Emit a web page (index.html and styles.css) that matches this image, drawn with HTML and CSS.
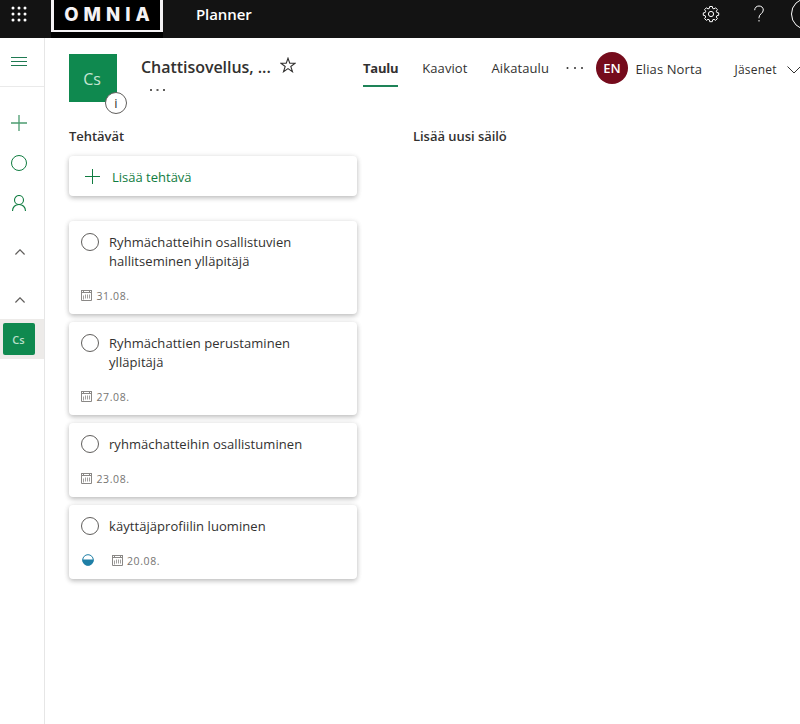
FILE: index.html
```html
<!DOCTYPE html>
<html lang="fi">
<head>
<meta charset="utf-8">
<title>Planner</title>
<link rel="stylesheet" href="styles.css">
</head>
<body>
<svg class="defs" width="0" height="0" aria-hidden="true">
  <symbol id="calendar" viewBox="0 0 11 11">
    <path d="M.5 1v9.500h10V1M0 .5h11M.5 2.500h10M2.500 0v2M8.500 0v2" fill="none" stroke="#8a8886"/>
    <path d="M2.500 5.500v4M4.500 4.500v4M6.500 4.500v4M8.500 4.500v4" fill="none" stroke="#a19f9d"/>
  </symbol>
</svg>
<header class="topbar">
  <svg class="waffle" width="16" height="16" viewBox="0 0 16 16" fill="#fff">
    <circle cx="2" cy="2" r="1.500"/><circle cx="8" cy="2" r="1.500"/><circle cx="14" cy="2" r="1.500"/>
    <circle cx="2" cy="8" r="1.500"/><circle cx="8" cy="8" r="1.500"/><circle cx="14" cy="8" r="1.500"/>
    <circle cx="2" cy="14" r="1.500"/><circle cx="8" cy="14" r="1.500"/><circle cx="14" cy="14" r="1.500"/>
  </svg>
  <div class="logo"><div class="logo-frame"><span>OMNIA</span></div></div>
  <span class="app-name">Planner</span>
  <svg class="gear" width="18" height="18" viewBox="-9 -9 18 18" fill="none" stroke="#fff">
    <path d="M-1.300-7.500h2.600l.4 1.900 1.300.5 1.600-1.100 1.800 1.800-1.100 1.600.5 1.300 1.900.4v2.400l-1.900.4-.5 1.300 1.100 1.600-1.800 1.800-1.600-1.100-1.300.5-.4 1.900h-2.600l-.4-1.900-1.300-.5-1.600 1.100-1.800-1.800 1.100-1.600-.5-1.300-1.900-.4v-2.400l1.900-.4.5-1.300-1.100-1.600 1.800-1.800 1.600 1.100 1.300-.5z"/>
    <circle r="2.600"/>
  </svg>
  <svg class="help" width="12" height="18" viewBox="0 0 12 18" fill="none" stroke="#fff">
    <path d="M1.700 5.200C1.700 2.600 3.500 1 6 1s4.300 1.600 4.300 4c0 3.500-4.300 3.900-4.300 7.500v.8M6 15v1.500"/>
  </svg>
  <span class="account"></span>
</header>
<div class="shell">
  <nav class="rail">
    <div class="rail-menu"><svg width="16" height="10" viewBox="0 0 16 10" stroke="#1f7a52"><path d="M0 .5h16M0 4.500h16M0 8.500h16"/></svg></div>
    <div class="rail-item"><svg width="16" height="16" viewBox="0 0 16 16" stroke="#107c41" opacity=".75"><path d="M0 8h16M8 0v16" stroke-width="1.300"/></svg></div>
    <div class="rail-item"><svg width="16" height="16" viewBox="0 0 16 16" fill="none" stroke="#107c41"><circle cx="8" cy="8" r="7.500"/></svg></div>
    <div class="rail-item"><svg width="16" height="16" viewBox="0 0 16 16" fill="none" stroke="#107c41" stroke-width="1.100"><circle cx="8" cy="5" r="4.500"/><path d="M1.500 16c0-4 2.800-6.500 6.500-6.500s6.500 2.500 6.500 6.500"/></svg></div>
    <div class="rail-fold"><svg width="10" height="6" viewBox="0 0 10 6" fill="none" stroke="#605e5c" stroke-width="1.200"><path d="M.4 5.500 5 .8l4.600 4.700"/></svg></div>
    <div class="rail-fold"><svg width="10" height="6" viewBox="0 0 10 6" fill="none" stroke="#605e5c" stroke-width="1.200"><path d="M.4 5.500 5 .8l4.600 4.700"/></svg></div>
    <div class="rail-plan"><span>Cs</span></div>
  </nav>
  <main class="content">
    <div class="plan-header">
      <div class="plan-tile">Cs<span class="info">i</span></div>
      <div class="plan-title">
        <div class="title-row"><h1>Chattisovellus, ...</h1>
          <svg class="star" width="16" height="16" viewBox="0 0 16 16" fill="none" stroke="#323130" stroke-width="1.100"><path d="m8 1.200 1.750 5h5.400l-4.350 3.300 1.650 5.200L8 11.600l-4.450 3.100 1.650-5.200L.85 6.200h5.400z"/></svg>
        </div>
        <svg class="dots" width="16" height="2" viewBox="0 0 16 2" fill="#605e5c"><path d="M0 0h2v2H0zM6.500 0h2v2h-2zM13 0h2v2h-2z"/></svg>
      </div>
      <div class="tabs">
        <span class="tab active">Taulu</span><span class="tab">Kaaviot</span><span class="tab">Aikataulu</span>
      </div>
      <svg class="more" width="18" height="2" viewBox="0 0 18 2" fill="#323130"><circle cx="1.500" cy="1" r="1"/><circle cx="9" cy="1" r="1"/><circle cx="16" cy="1" r="1"/></svg>
      <span class="avatar">EN</span>
      <span class="user">Elias Norta</span>
      <span class="members">Jäsenet</span>
      <svg class="chevron" width="14" height="8" viewBox="0 0 14 8" fill="none" stroke="#323130"><path d="m.5.5 6.500 6.500L13.500.5"/></svg>
    </div>
    <div class="board">
      <section class="bucket">
        <h2>Tehtävät</h2>
        <div class="add-task"><svg width="15" height="15" viewBox="0 0 15 15" stroke="#107c41"><path d="M0 7.500h15M7.500 0v15"/></svg><span>Lisää tehtävä</span></div>
        <article class="card">
          <div class="task"><i class="check"></i><p>Ryhmächatteihin osallistuvien<br>hallitseminen ylläpitäjä</p></div>
          <div class="meta"><svg class="cal" width="11" height="11"><use href="#calendar"/></svg><span>31.08.</span></div>
        </article>
        <article class="card">
          <div class="task"><i class="check"></i><p>Ryhmächattien perustaminen<br>ylläpitäjä</p></div>
          <div class="meta"><svg class="cal" width="11" height="11"><use href="#calendar"/></svg><span>27.08.</span></div>
        </article>
        <article class="card">
          <div class="task"><i class="check"></i><p>ryhmächatteihin osallistuminen</p></div>
          <div class="meta"><svg class="cal" width="11" height="11"><use href="#calendar"/></svg><span>23.08.</span></div>
        </article>
        <article class="card">
          <div class="task"><i class="check"></i><p>käyttäjäprofiilin luominen</p></div>
          <div class="meta"><svg class="progress" width="12" height="12" viewBox="0 0 12 12"><circle cx="6" cy="6" r="5.300" fill="#fff" stroke="#1f7fa6" stroke-width="1"/><path d="M.5 5.500h11V6a5.500 5.500 0 0 1-11 0z" fill="#1f7fa6"/></svg><svg class="cal" width="11" height="11"><use href="#calendar"/></svg><span>20.08.</span></div>
        </article>
      </section>
      <section class="bucket"><h2>Lisää uusi säilö</h2></section>
    </div>
  </main>
</div>
</body>
</html>
```
FILE: styles.css
```css
* { box-sizing: border-box; }
body { margin: 0; width: 800px; height: 724px; overflow: hidden; background: #fff; color: #323130; font: 13px/19px "Open Sans", "Noto Sans", sans-serif; }
h1, h2, p { margin: 0; }
svg { display: block; flex: none; }
span { white-space: nowrap; }
.defs { position: absolute; }

.topbar { display: flex; align-items: flex-start; height: 38px; background: #131313; overflow: hidden; }
.waffle { margin: 5.500px 0 0 10.500px; }
.logo { width: 112px; height: 38px; margin-left: 24.500px; background: #000; flex: none; }
.logo-frame { height: 32px; border: 3px solid #f4f2f4; border-top: 0; border-bottom-width: 2px; display: flex; justify-content: center; }
.logo-frame span { color: #f4f2f4; font: 800 18.500px/29px Inter, sans-serif; letter-spacing: 5px; margin-right: -5px; }
.app-name { width: 100px; margin: 2px 0 0 33px; color: #fff; font-size: 15px; font-weight: 600; line-height: 24px; letter-spacing: -.1px; }
.gear { margin: 5px 0 0 406px; }
.help { margin: 5px 0 0 33px; }
.account { width: 32px; height: 32px; margin: -2px -24px 0 26px; border: 1px solid #fff; border-radius: 50%; flex: none; }

.shell { display: flex; height: 686px; }
.rail { width: 45px; border-right: 1px solid #e6e6e6; flex: none; }
.rail-menu { height: 49px; padding: 19px 0 0 11px; border-bottom: 1px solid #eaeaea; margin-bottom: 16px; }
.rail-item { height: 40px; display: flex; align-items: center; padding-left: 11px; }
.rail-fold { height: 48px; display: flex; align-items: center; padding-left: 15px; margin-top: 5px; }
.rail-fold + .rail-fold { margin-top: 0; }
.rail-plan { display: flex; height: 40px; padding: 4px 3px; margin-top: -5px; background: #edebe9; }
.rail-plan span { width: 32px; height: 32px; padding-right: 1px; border-radius: 2px; background: #0f894f; color: #b9dfca; text-align: center; font-weight: 600; font-size: 11px; line-height: 33px; }

.content { flex: 1; min-width: 0; padding-left: 24px; }
.plan-header { display: flex; align-items: flex-start; height: 88px; }
.plan-tile { position: relative; width: 48px; height: 48px; margin-top: 16px; padding-right: 2px; background: #0f894f; color: #c5e5d3; text-align: center; font-size: 16px; line-height: 50px; flex: none; }
.info { position: absolute; left: 36px; top: 38px; width: 22px; height: 22px; border: 1px solid #605e5c; border-radius: 50%; background: #fff; color: #323130; font-size: 13px; line-height: 20px; }
.plan-title { width: 246px; padding: 17px 0 0 24px; flex: none; }
.title-row { display: flex; align-items: flex-start; }
h1 { width: 139px; font-size: 16px; font-weight: 600; line-height: 24px; letter-spacing: -.04px; white-space: nowrap; }
.star { margin-top: 2px; }
.dots { margin: 10px 0 0 9px; }
.tabs { display: flex; width: 203px; margin-top: 20px; gap: 24px; flex: none; }
.tab { height: 29px; line-height: 21px; letter-spacing: .1px; }
.active { font-weight: 700; border-bottom: 2px solid #1e8358; letter-spacing: -.25px; }
.more { margin: 29px 12px 0 0; }
.avatar { width: 32px; height: 32px; margin-top: 14px; border-radius: 50%; background: #750b1c; color: #fff; text-align: center; font-weight: 600; font-size: 13px; line-height: 33px; flex: none; }
.user { width: 99px; margin: 21px 0 0 7.500px; line-height: 20px; letter-spacing: .1px; flex: none; }
.members { width: 52px; margin: 22px 0 0 0; font-size: 12px; letter-spacing: .2px; flex: none; }
.chevron { margin: 28px 0 0 0; }

.board { display: flex; gap: 56px; }
.bucket { width: 288px; }
h2 { height: 30px; font-size: 13px; font-weight: 600; line-height: 20px; letter-spacing: -.04px; }
.add-task, .card { background: #fff; border-radius: 4px; box-shadow: 0 2px 5px rgba(0,0,0,.24), 0 0 6px rgba(0,0,0,.06); }
.add-task { display: flex; align-items: center; height: 40px; padding-left: 16px; gap: 12px; color: #107c41; margin-bottom: 25px; }
.add-task span { padding-top: 3px; }
.card { padding: 12px; margin-bottom: 8px; }
.task { display: flex; gap: 10px; letter-spacing: .06px; }
.check { width: 18px; height: 18px; border: 1px solid #605e5c; border-radius: 50%; flex: none; }
.meta { display: flex; align-items: center; gap: 4.500px; height: 15px; margin-top: 16px; color: #767472; font-size: 10.500px; line-height: 15px; }
.meta span { letter-spacing: .6px; padding-top: 3px; }
.cal { margin-top: 1px; }
.progress { margin: 1px 13.500px 0 .5px; }
```
